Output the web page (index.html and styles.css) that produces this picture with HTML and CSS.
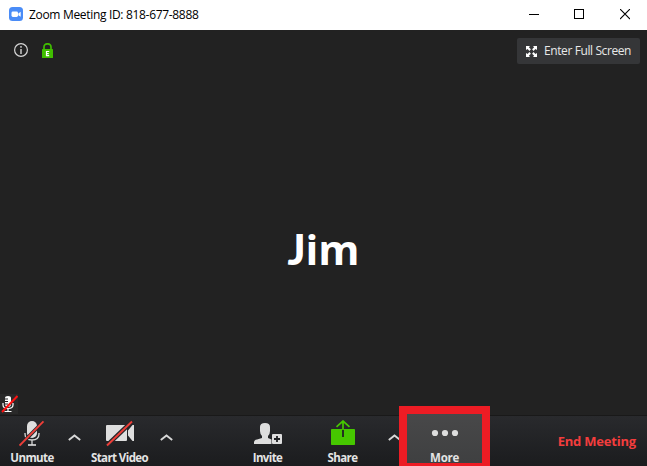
FILE: index.html
```html
<!DOCTYPE html>
<html lang="en">
<head>
<meta charset="utf-8">
<title>Zoom Meeting</title>
<link rel="stylesheet" href="styles.css">
</head>
<body>
<div class="window">
  <header class="titlebar">
    <svg class="app-icon" width="14" height="14" viewBox="0 0 14 14"><rect width="14" height="14" rx="3.5" fill="#4a8cf7"/><rect x="2.5" y="4.5" width="6.5" height="5.5" rx="1.4" fill="#fff"/><path d="M9.3 6.5l2.4-1.7v5L9.3 8.200z" fill="#fff"/></svg>
    <span class="title">Zoom Meeting ID: 818-677-8888</span>
    <div class="controls">
      <svg width="10" height="11" viewBox="0 0 10 11"><path d="M0 5.500h10" stroke="#000"/></svg>
      <svg width="10" height="11" viewBox="0 0 10 11"><rect x=".5" y=".5" width="9" height="9" fill="none" stroke="#000"/></svg>
      <svg width="10" height="11" viewBox="0 0 10 11"><path d="M0 0l10 10M10 0L0 10" stroke="#000" stroke-width="1.100"/></svg>
    </div>
  </header>
  <main class="stage">
    <div class="topline">
      <svg class="info" width="14" height="14" viewBox="0 0 14 14"><circle cx="7" cy="7" r="6.400" fill="none" stroke="#d6d6d6" stroke-width="1.200"/><path d="M7 3v1.700M7 6v5" stroke="#b5b5b5" stroke-width="1.700"/></svg>
      <svg class="lock" width="11" height="15" viewBox="0 0 11 15"><path d="M2 7V3.900a3.500 3.100 0 0 1 7 0V7" fill="none" stroke="#40bd00" stroke-width="1.700"/><rect y="6" width="11" height="9" rx=".6" fill="#40bd00"/><path d="M7.200 8.500H4.500v4.200h2.700M4.500 10.600h2.300" fill="none" stroke="#fff" stroke-width="1.200"/></svg>
      <button class="fullscreen">
        <svg width="11" height="11" viewBox="0 0 11 11"><path d="M0 0h4L2.900 1.300l2 2L3.500 4.900l-2-2L0 4zM11 0v4L9.500 2.900l-2 2L6.100 3.300l2-2L7 0zM0 11V7l1.500 1.100 2-2 1.400 1.600-2 2L4 11zM11 11H7l1.100-1.300-2-2 1.400-1.600 2 2L11 7z" fill="#fff"/></svg>
        <span>Enter Full Screen</span>
      </button>
    </div>
    <div class="name"><span><span class="initial">J</span>im</span></div>
    <div class="muted">
      <svg width="18" height="20" viewBox="0 0 18 20"><path d="M5 4q0-2 3-2t3 2v6q0 3-3 3t-3-3z" fill="#fff"/><path d="M5 5h3M5 7.500h3M5 10h3" stroke="#222"/><path d="M3 9v2q0 3.500 5 3.500t5-3.500V9M8 14.500V18M4.500 17.500h7" stroke="#fff" stroke-width="1.200" fill="none"/><path d="M2 18L17.500 2" stroke="#ff1212" stroke-width="2"/></svg>
    </div>
  </main>
  <footer class="toolbar">
    <div class="tool unmute">
      <svg width="26" height="28" viewBox="0 1 26 28"><rect x="8" y="2" width="10" height="17" rx="5" fill="#dedede"/><path d="M6 14v1q0 6 7 6t7-6v-1M13 21v5" fill="none" stroke="#d6d6d6" stroke-width="1.300"/><path d="M9 26h8" stroke="#dedede" stroke-width="1.600"/><path d="M.8 26.500L24.500 2.500" stroke="#26272a" stroke-width="3.600"/><path d="M.5 26.500L24.500 2.300" stroke="#ef3e38" stroke-width="1.900"/></svg>
      <span>Unmute</span>
    </div>
    <div class="caret"><svg width="13" height="7" viewBox="0 0 13 7"><path d="M.8 6l5.700-4.500L12.200 6" fill="none" stroke="#d8d8d8" stroke-width="1.900"/></svg></div>
    <div class="tool video">
      <svg width="28" height="28" viewBox="0 0 28 28"><path d="M0 6q0-1 1-1h19q1 0 1 1v14q0 1-1 1H1q-1 0-1-1zM22 10.500L26.500 5H28v16h-1.500L22 15.500z" fill="#dedede"/><path d="M1 25.500L26 1.500" stroke="#26272a" stroke-width="4.500"/><path d="M1 25.500L26 1.500" stroke="#ef3e38" stroke-width="1.900"/></svg>
      <span>Start Video</span>
    </div>
    <div class="caret"><svg width="13" height="7" viewBox="0 0 13 7"><path d="M.8 6l5.700-4.500L12.200 6" fill="none" stroke="#d8d8d8" stroke-width="1.900"/></svg></div>
    <div class="tool invite">
      <svg width="28" height="28" viewBox="0 -1 28 28"><path d="M6 6q0-4 5-4T16 6v4q0 3-2 5v2l3.500 1.500V23H0v-2q0-2 3-2.500l5-1.500v-2q-2-2-2-5z" fill="#dedede"/><rect x="18" y="13" width="10" height="10" rx="1" fill="#dedede"/><path d="M23 15v6M20 18h6" stroke="#202124" stroke-width="1.800"/></svg>
      <span>Invite</span>
    </div>
    <div class="tool share">
      <svg width="24" height="28" viewBox="0 0 24 28"><rect y="9" width="24" height="16" rx=".8" fill="#46c700"/><path d="M12 9v8" stroke="#202124" stroke-width="1.800"/><path d="M12 10V1.500M5.500 6.800L12 1l6.500 5.800" fill="none" stroke="#46c700" stroke-width="1.700"/></svg>
      <span>Share</span>
    </div>
    <div class="caret share-caret"><svg width="13" height="7" viewBox="0 0 13 7"><path d="M.8 6l5.700-4.500L12.200 6" fill="none" stroke="#d8d8d8" stroke-width="1.900"/></svg></div>
    <div class="more">
      <svg width="28" height="8" viewBox="0 0 28 8"><g fill="#dedede"><circle cx="4" cy="4" r="3.100"/><circle cx="14" cy="4" r="3.100"/><circle cx="24" cy="4" r="3.100"/></g></svg>
      <span>More</span>
    </div>
    <button class="end"><span>End Meeting</span></button>
  </footer>
</div>
</body>
</html>
```

FILE: styles.css
```css
* { box-sizing: border-box; }
body { margin: 0; font-family: "Open Sans", "Noto Sans", sans-serif; overflow: hidden; }
button { border: 0; padding: 0; font-family: inherit; background: none; }
svg { display: block; flex: none; }
span { white-space: nowrap; }
.window { width: 647px; height: 466px; display: flex; flex-direction: column; background: #222; }
.titlebar { height: 30px; flex: none; display: flex; align-items: center; padding: 0 17px 0 9px; background: #fff; color: #000; }
.app-icon { margin-top: -2px; }
.title { margin-left: 6px; font-size: 12px; line-height: 16px; letter-spacing: -.32px; }
.controls { display: flex; gap: 36px; margin-left: auto; margin-top: -1px; }
.controls svg:first-child { margin-right: -1px; }
.stage { height: 385px; flex: none; display: flex; flex-direction: column; }
.topline { height: 42px; display: flex; align-items: center; padding: 0 7px 0 14px; }
.info { margin-top: -2px; }
.lock { margin: -2px 0 0 14px; }
.fullscreen { margin-left: auto; width: 123px; height: 26px; display: flex; align-items: center; gap: 7px; padding-left: 9px; border-radius: 2px; background: #353638; color: #e8e8e8; font-size: 12px; line-height: 16px; letter-spacing: -.4px; }
.name { flex: 1; display: flex; justify-content: center; padding-top: 147px; color: #fff; font-size: 42px; line-height: 60px; font-weight: 700; }
.initial { font-family: Lato, sans-serif; font-weight: 900; }
.muted { width: 18px; height: 20px; margin: 0 0 1px 0; background: #292929; }
.toolbar { height: 51px; flex: none; display: flex; background: linear-gradient(#292a2d, #1b1c1e); border-top: 1px solid #191919; color: #e4e4e4; font-size: 11.5px; line-height: 16px; font-weight: 700; letter-spacing: -.6px; }
.tool { display: flex; flex-direction: column; align-items: center; padding-top: 4px; }
.tool span { margin-top: 2px; }
.unmute { width: 64px; }
.video { width: 71px; }
.invite { width: 61px; margin-left: 60px; }
.share { width: 61px; margin-left: 14px; }
.caret { width: 22px; padding: 18px 0 0 5px; }
.unmute + .caret { width: 20px; padding-left: 4px; }
.share-caret { width: 26px; padding-left: 15px; }
.more { position: relative; flex: none; width: 91px; height: 60px; margin-top: -10px; padding-top: 15px; display: flex; flex-direction: column; align-items: center; border: 8px solid #ed1c24; border-bottom-width: 3px; background: linear-gradient(#484849, #3f4041); }
.more span { margin-top: 13px; letter-spacing: -.3px; }
.end { margin-left: auto; padding-right: 11px; color: #f33d3d; font-size: 13px; font-weight: 700; letter-spacing: -.2px; }
```
